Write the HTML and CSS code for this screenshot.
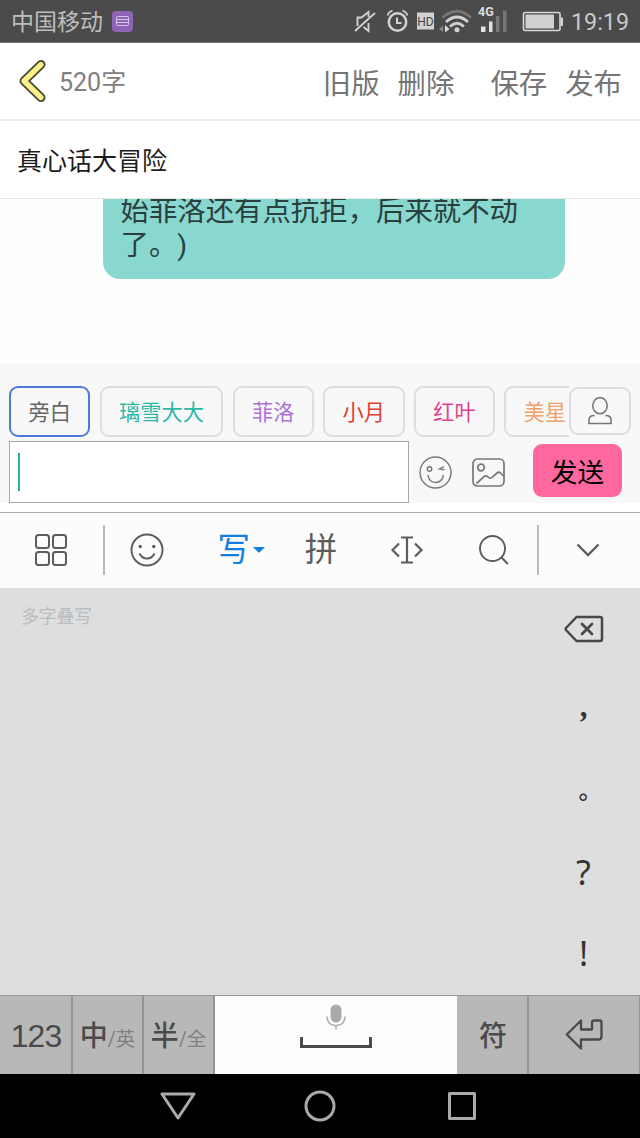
FILE: index.html
```html
<!DOCTYPE html>
<html lang="zh-CN">
<head>
<meta charset="utf-8">
<title>真心话大冒险</title>
<link rel="stylesheet" href="styles.css">
</head>
<body>
<div class="screen">
  <div class="status">
    <span class="carrier">中国移动</span>
    <svg class="ime" width="21" height="21" viewBox="0 0 21 21"><rect width="21" height="21" rx="4" fill="#8f63b5"/><g fill="none" stroke="#d9c5ea" stroke-width="1"><rect x="4.500" y="5.500" width="12" height="9" rx="1"/><path d="M4.500 8.500h12M4.500 11.500h12"/></g></svg>
    <svg class="indicators" width="212" height="42" viewBox="0 0 212 42">
      <g fill="none" stroke="#d2d2d2" stroke-width="2">
        <path d="M2 31L22 13" stroke-width="1.800"/>
        <path d="M4.500 26V17.500H8.500L15.500 12V17M10.500 27L15.500 31V23" stroke-width="1.900"/>
        <circle cx="44.500" cy="22" r="8.700" stroke-width="2.500"/>
        <path d="M44 17.500V23H48.500"/>
        <path d="M34.500 15.500Q35.500 12 39.500 10.500M49.500 10.500Q53.500 12 54.500 15.500" stroke-width="1.800"/>
      </g>
      <rect x="64" y="12.500" width="17" height="17" fill="#d2d2d2"/>
      <text class="hd" x="72.500" y="25.500" text-anchor="middle">HD</text>
      <g fill="none" stroke-width="2.700">
        <path d="M89.500 17.500Q104 5 118 17.500" stroke="#777"/>
        <path d="M93 22Q104 12 115 22M97 26.500Q104 20 111 26.500" stroke="#d2d2d2"/>
      </g>
      <circle cx="104" cy="29.800" r="2.500" fill="#d2d2d2"/>
      <path d="M90 25.500L86 29L90 32Z" fill="#888"/><path d="M92 25L96.500 29L92 32.500Z" fill="#ddd"/>
      <text class="net" x="125" y="16">4G</text>
      <path d="M128 26.500h4.500v5.500h-4.500zM136 21.500h3.500V32h-3.500z" fill="#e2e2e2"/>
      <path d="M143 16h3.500v16H143zM150 10.500h3.500V32H150z" fill="#777"/>
      <rect x="170.500" y="12.500" width="36.500" height="18" rx="1.500" fill="none" stroke="#d8d8d8" stroke-width="1.600"/>
      <path d="M172.500 14.500h28.500v14h-28.500zM207.500 17.500h2.500v8.500H207.500z" fill="#d0d0d0"/>
    </svg>
    <span class="clock">19:19</span>
  </div>

  <div class="header">
    <svg class="back" width="30" height="46" viewBox="0 0 30 46" fill="none" stroke-linecap="round" stroke-linejoin="round"><path d="M23 6.500L6 23L23 39.500" stroke="#4b4a35" stroke-width="9"/><path d="M23 6.500L6 23L23 39.500" stroke="#fbf08a" stroke-width="5.300"/></svg>
    <span class="count">520字</span>
    <div class="actions"><span>旧版</span><span>删除</span><span class="save">保存</span><span>发布</span></div>
  </div>

  <div class="title">真心话大冒险</div>

  <div class="chat"><div class="bubble">始菲洛还有点抗拒，后来就不动<br>了。)</div></div>

  <div class="composer">
    <div class="roles">
      <div class="chips">
        <span class="chip active">旁白</span><span class="chip teal">璃雪大大</span><span class="chip violet">菲洛</span><span class="chip red">小月</span><span class="chip pink">红叶</span><span class="chip orange">美星</span>
      </div>
      <div class="person"><svg width="24" height="28" viewBox="0 0 24 28" fill="none" stroke="#777" stroke-width="1.600"><ellipse cx="12" cy="8.700" rx="7.200" ry="8"/><path d="M6.500 18.500Q1 18.500 1 23V26.500H23V23Q23 18.500 17.500 18.500"/></svg></div>
    </div>
    <div class="entry">
      <div class="input"><span class="caret"></span></div>
      <svg class="wink" width="33" height="33" viewBox="0 0 33 33" fill="none" stroke="#777" stroke-width="1.400"><circle cx="16.500" cy="16.500" r="15.500"/><circle cx="10.500" cy="13" r="2.200"/><path d="M25 10.500L20.500 13L25.500 13.800M9 19Q10 26.500 16.500 26.500T24.500 19"/></svg>
      <svg class="photo" width="33" height="29" viewBox="0 0 33 29" fill="none" stroke="#777" stroke-width="1.700"><rect x="1" y="1" width="31" height="27" rx="4.500"/><circle cx="9" cy="9.500" r="3.300"/><path d="M4.500 25.500L12.500 18.200Q14 17.200 15.500 18.500Q18 21.500 20.500 19L25 15Q27 13.500 28.500 15L31.500 18"/></svg>
      <div class="send">发送</div>
    </div>
  </div>

  <div class="toolbar">
    <div class="tool apps"><svg width="34" height="34" viewBox="0 0 34 34" fill="none" stroke="#5c5c5c" stroke-width="2"><rect x="2" y="2" width="13" height="13" rx="2.500"/><rect x="19" y="2" width="13" height="13" rx="2.500"/><rect x="2" y="19" width="13" height="13" rx="2.500"/><rect x="19" y="19" width="13" height="13" rx="2.500"/></svg></div>
    <div class="tool"><svg width="34" height="34" viewBox="0 0 34 34" fill="none" stroke="#5c5c5c" stroke-width="1.900"><circle cx="17" cy="17" r="15.500"/><path d="M9.500 20.500Q12 25.500 17 25.500T24.500 20.500"/><g fill="#5c5c5c" stroke="none"><circle cx="10.200" cy="13.500" r="1.700"/><circle cx="23.800" cy="13.500" r="1.700"/></g></svg></div>
    <div class="tool write"><span>写</span><svg width="12" height="6" viewBox="0 0 12 6"><path d="M0 0H12L7 5Q6 6 5 5Z" fill="#127ee0"/></svg></div>
    <div class="tool pin">拼</div>
    <div class="tool"><svg width="34" height="30" viewBox="0 0 34 30" fill="none" stroke="#5c5c5c" stroke-width="2.200"><path d="M11 2.500H23M11 27.500H23M17 2.500V27.500M9 8.500L2.500 15L9 21.500M25 8.500L31.500 15L25 21.500"/></svg></div>
    <div class="tool"><svg width="32" height="32" viewBox="0 0 32 32" fill="none" stroke="#5c5c5c" stroke-width="1.900"><circle cx="14.500" cy="14.500" r="12.500"/><path d="M23.500 23.500L30 30"/></svg></div>
    <div class="tool collapse"><svg width="24" height="14" viewBox="0 0 24 14" fill="none" stroke="#5c5c5c" stroke-width="2.300"><path d="M1.500 1.500L12 12L22.500 1.500"/></svg></div>
  </div>

  <div class="pad">
    <div class="hint">多字叠写</div>
    <div class="marks">
      <div><svg width="40" height="28" viewBox="0 0 40 28" fill="none" stroke="#484848" stroke-width="2.500" stroke-linejoin="round" stroke-linecap="round"><path d="M12.500 2H36Q38 2 38 4V24Q38 26 36 26H12.500L2 15Q1.300 14 2 13Z"/><path d="M18 9L28 19M28 9L18 19" stroke-width="2.700"/></svg></div>
      <div class="comma">,</div>
      <div class="stop">。</div>
      <div>?</div>
      <div>!</div>
    </div>
  </div>

  <div class="keys">
    <div class="key num">123</div>
    <div class="key lang">中<small>/英</small></div>
    <div class="key lang">半<small>/全</small></div>
    <div class="key space">
      <svg width="20" height="26" viewBox="0 0 20 26"><rect x="4.500" y="0.500" width="11" height="18" rx="5.500" fill="#aaa"/><path d="M1 12.500Q1.500 21.500 10 21.500T19 12.500M10 21.500V25.500" fill="none" stroke="#aaa" stroke-width="1.500"/></svg>
      <span class="bar"></span>
    </div>
    <div class="key sym">符</div>
    <div class="key enter"><svg width="38" height="31" viewBox="0 0 38 31" fill="none" stroke="#4a4a4a" stroke-width="2.300" stroke-linejoin="round"><path d="M1.800 15.500L16 1.500V10.500H27V3.500Q27 1.500 29 1.500H34.500Q36.500 1.500 36.500 3.500V17.500Q36.500 20.500 33.500 20.500H16V29.500Z"/></svg></div>
  </div>

  <div class="nav">
    <svg width="36" height="28" viewBox="0 0 36 28" fill="none" stroke="#aaa" stroke-width="3" stroke-linejoin="round"><path d="M2 2H34L18 26Z"/></svg>
    <svg width="32" height="32" viewBox="0 0 32 32" fill="none" stroke="#aaa" stroke-width="3"><circle cx="16" cy="16" r="14"/></svg>
    <svg width="28" height="28" viewBox="0 0 28 28" fill="none" stroke="#aaa" stroke-width="3" stroke-linejoin="round"><rect x="1.500" y="1.500" width="25" height="25"/></svg>
  </div>
</div>
</body>
</html>
```
FILE: styles.css
```css
* { box-sizing: border-box; }
body {
  margin: 0;
  font-family: Roboto, "Noto Sans CJK SC", sans-serif;
  background: #fff;
}
svg { display: block; flex: none; }
.screen {
  width: 640px;
  height: 1138px;
  display: flex;
  flex-direction: column;
  overflow: hidden;
  white-space: nowrap;
}
.screen > div { flex: none; }

.status {
  height: 43px;
  display: flex;
  align-items: center;
  padding-left: 11px;
  background: #4b4b4b;
  border-bottom: 1px solid #777;
  color: #c8c8c8;
}
.carrier { flex: none; width: 101px; padding-top: 3px; font-size: 23px; line-height: 39px; color: #bdbdbd; }
.indicators { margin-left: 220px; }
.clock { margin-left: 6px; font-size: 23.300px; padding-top: 2px; }
.hd { font: 12px Roboto, sans-serif; fill: #444; }
.net { font: bold 12.500px Roboto, sans-serif; fill: #ddd; }

.header {
  height: 78px;
  display: flex;
  align-items: center;
  padding: 0 18px;
  border-bottom: 2px solid #ededed;
  color: #757575;
}
.count { margin-left: 11px; font-size: 25px; padding-top: 3px; color: #808080; }
.actions {
  display: flex;
  gap: 18px;
  margin-left: auto;
  padding-top: 7px;
  font-size: 28.400px;
}
.save { margin-left: 18px; }
.count, .actions { line-height: 40px; }

.title {
  height: 78px;
  padding: 2px 17px 0;
  border-bottom: 1px solid #e6e6e6;
  font-size: 25px;
  line-height: 77px;
  color: #1c1c1c;
}

.chat { height: 164px; overflow: hidden; background: #fefefe; }
.bubble {
  width: 462px;
  height: 180px;
  margin: -100px 0 0 103px;
  padding: 96px 17.500px 0;
  border-radius: 17px;
  background: #89d8cf;
  color: #29403e;
  font-size: 28.400px;
  font-kerning: none;
  text-spacing-trim: space-all;
  line-height: 34px;
}

.composer { height: 140px; padding: 23px 9px 0; background: #f8f8f8; }
.roles { display: flex; height: 55px; align-items: flex-start; }
.chips { width: 560px; display: flex; gap: 9.200px; overflow: hidden; }
.chip {
  flex: none;
  height: 51px;
  padding: 0 17.500px;
  border: 2px solid #dedede;
  border-radius: 9px;
  font-size: 21.200px;
  line-height: 50px;
}
.active { border-color: #4f7bd8; color: #666; }
.teal { color: #2ab8a5; }
.violet { color: #ad72d8; }
.red { color: #df3c34; }
.pink { color: #e1408f; }
.orange { color: #f2a06b; }
.person {
  width: 62px;
  height: 48px;
  margin-top: 1px;
  display: flex;
  align-items: center;
  justify-content: center;
  border: 2px solid #dedede;
  border-radius: 9px;
}
.entry { display: flex; height: 62px; align-items: center; }
.input {
  width: 400px;
  height: 62px;
  padding: 11px 8px;
  border: 1px solid #a7a7ab;
  background: #fff;
}
.caret { display: block; width: 2px; height: 38px; background: #25b0a8; }
.wink { margin-left: 10px; }
.photo { margin-left: 20px; }
.send {
  width: 89px;
  height: 53px;
  margin: -3px 0 0 28px;
  border-radius: 9px;
  background: #ff689f;
  color: #000;
  font-size: 26.700px;
  line-height: 58px;
  text-align: center;
}

.toolbar {
  height: 76px;
  margin-top: 9px;
  display: flex;
  align-items: center;
  border-top: 1px solid #a6aab2;
  background: #fcfcfc;
  color: #5c5c5c;
  padding-bottom: 1px;
}
.tool {
  width: 87px;
  height: 50px;
  display: flex;
  align-items: center;
  justify-content: center;
}
.apps { width: 105px; border-right: 2px solid #bbb; }
.apps + .tool { width: 85px; }
.collapse { width: 103px; border-left: 2px solid #bbb; padding-right: 3px; }
.write { gap: 3px; padding-left: 16px; color: #127ee0; }
.write, .pin { font-size: 32.500px; line-height: 52px; }
.pin { padding-left: 2px; }

.pad {
  height: 407px;
  display: flex;
  justify-content: space-between;
  background: #dedede;
}
.hint { padding: 16px 21px; font-size: 17.800px; line-height: 26px; color: #b8bcc0; }
.marks {
  width: 113px;
  display: grid;
  grid-template-rows: repeat(5, 81px);
  font: 34px "Noto Sans", sans-serif;
  color: #333;
}
.marks div { display: flex; align-items: center; justify-content: center; }
.marks .comma { font-family: "Liberation Serif", serif; font-weight: bold; font-size: 31px; padding-bottom: 5px; }
.marks .stop { font: 500 24px "Noto Sans CJK SC", sans-serif; padding: 0 0 5px 14px; }

.keys {
  height: 79px;
  display: grid;
  grid-template-columns: 73px 71px 71px 242px 72px 111px;
  border-top: 1px solid #999;
  background: #b8b8b8;
  color: #4a4a4a;
}
.key {
  display: flex;
  align-items: baseline;
  justify-content: center;
  border-right: 2px solid #949494;
  font-size: 28px;
  line-height: 82px;
  height: 78px;
}
.lang { font-weight: 500; }
.key small { font-size: 19.500px; font-weight: 400; color: #808080; }
.num { font-family: "Liberation Sans", sans-serif; font-size: 32px; letter-spacing: -1px; padding-left: 1px; line-height: 80px; }
.sym { font-weight: 500; padding-left: 2px; }
.space {
  flex-direction: column;
  align-items: center;
  justify-content: flex-start;
  gap: 7px;
  padding-top: 8px;
  border: 0;
  background: #fdfdfd;
}
.bar { width: 72px; height: 11px; border: 3px solid #4a4a4a; border-top: 0; border-radius: 1px; }
.enter { align-items: center; border-right-width: 1px; padding-bottom: 1px; }

.nav {
  height: 64px;
  display: flex;
  align-items: center;
  gap: 108px;
  padding-left: 160px;
  background: #000;
}
.nav svg:last-child { margin-left: 4px; }
```
